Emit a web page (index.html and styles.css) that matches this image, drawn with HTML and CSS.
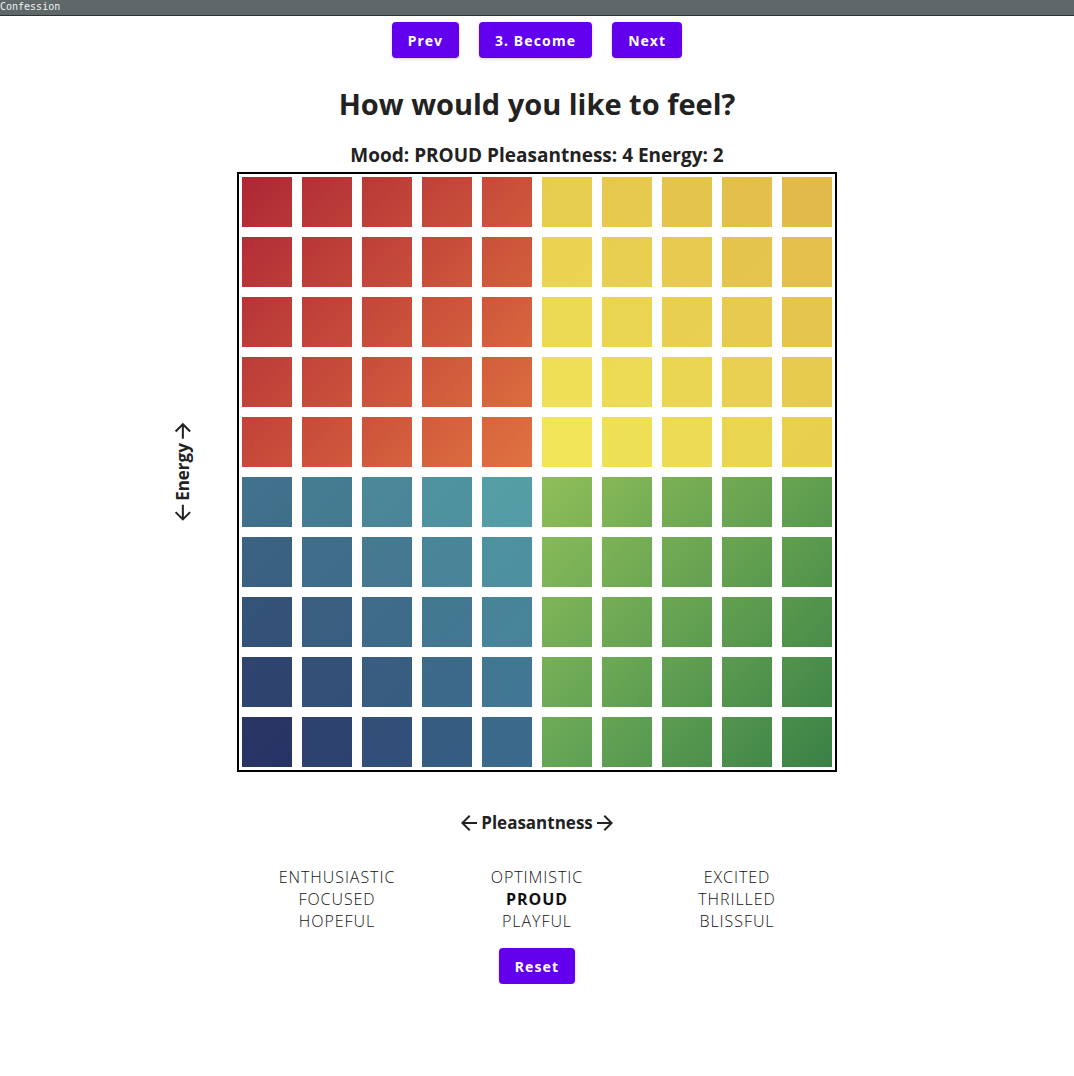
FILE: index.html
```html
<!DOCTYPE html>
<html>
<head>
<meta charset="utf-8">
<title>Confession</title>
<link rel="stylesheet" href="styles.css">
</head>
<body>
<div class="titlebar">Confession</div>
<nav class="nav">
  <button class="btn">Prev</button>
  <button class="btn">3. Become</button>
  <button class="btn">Next</button>
</nav>
<h1 class="title">How would you like to feel?</h1>
<h2 class="status">Mood: PROUD Pleasantness: 4 Energy: 2</h2>
<div class="stage">
  <div class="energy">
    <div class="axis axis-v">
      <svg class="arrow" viewBox="0 0 24 24"><path d="M20 11H7.83l5.59-5.59L12 4l-8 8 8 8 1.41-1.41L7.83 13H20v-2z"/></svg>
      <span>Energy</span>
      <svg class="arrow" viewBox="0 0 24 24"><path d="M4 11h12.17l-5.59-5.59L12 4l8 8-8 8-1.41-1.41L16.17 13H4v-2z"/></svg>
    </div>
  </div>
  <div class="board">
    <div class="quad q-red">
      <div></div><div></div><div></div><div></div><div></div>
      <div></div><div></div><div></div><div></div><div></div>
      <div></div><div></div><div></div><div></div><div></div>
      <div></div><div></div><div></div><div></div><div></div>
      <div></div><div></div><div></div><div></div><div></div>
    </div>
    <div class="quad q-yellow">
      <div></div><div></div><div></div><div></div><div></div>
      <div></div><div></div><div></div><div></div><div></div>
      <div></div><div></div><div></div><div></div><div></div>
      <div></div><div></div><div></div><div></div><div></div>
      <div></div><div></div><div></div><div></div><div></div>
    </div>
    <div class="quad q-blue">
      <div></div><div></div><div></div><div></div><div></div>
      <div></div><div></div><div></div><div></div><div></div>
      <div></div><div></div><div></div><div></div><div></div>
      <div></div><div></div><div></div><div></div><div></div>
      <div></div><div></div><div></div><div></div><div></div>
    </div>
    <div class="quad q-green">
      <div></div><div></div><div></div><div></div><div></div>
      <div></div><div></div><div></div><div></div><div></div>
      <div></div><div></div><div></div><div></div><div></div>
      <div></div><div></div><div></div><div></div><div></div>
      <div></div><div></div><div></div><div></div><div></div>
    </div>
  </div>
  <div></div>
</div>
<div class="axis axis-h">
  <svg class="arrow" viewBox="0 0 24 24"><path d="M20 11H7.83l5.59-5.59L12 4l-8 8 8 8 1.41-1.41L7.83 13H20v-2z"/></svg>
  <span>Pleasantness</span>
  <svg class="arrow" viewBox="0 0 24 24"><path d="M4 11h12.17l-5.59-5.59L12 4l8 8-8 8-1.41-1.41L16.17 13H4v-2z"/></svg>
</div>
<div class="words">
  <div class="col"><div>ENTHUSIASTIC</div><div>FOCUSED</div><div>HOPEFUL</div></div>
  <div class="col"><div>OPTIMISTIC</div><div class="sel">PROUD</div><div>PLAYFUL</div></div>
  <div class="col"><div>EXCITED</div><div>THRILLED</div><div>BLISSFUL</div></div>
</div>
<div class="reset-row"><button class="btn">Reset</button></div>
</body>
</html>
```
FILE: styles.css
```css
* { box-sizing: border-box; }
body {
  margin: 0;
  font-family: "Open Sans", "Noto Sans", sans-serif;
  color: #222;
  background: #fff;
}
.titlebar {
  height: 16px;
  background: #5f6769;
  border-bottom: 1px solid #2e3436;
  color: #f2f2f2;
  font-family: "DejaVu Sans Mono", monospace;
  font-size: 10px;
  line-height: 14px;
}
.nav {
  display: flex;
  justify-content: center;
  gap: 20px;
  margin-top: 6px;
}
.btn {
  height: 36px;
  padding: 0 16px;
  min-width: 64px;
  border: none;
  border-radius: 4px;
  background: #6200ee;
  color: #fff;
  font-family: "Noto Sans", sans-serif;
  font-weight: 700;
  font-size: 14px;
  letter-spacing: 1.1px;
  box-shadow: 0 1px 3px rgba(0,0,0,0.2);
}
.title {
  margin: 26px 0 0;
  text-align: center;
  font-size: 29px;
  line-height: 40px;
  font-weight: 700;
}
.status {
  margin: 19px 0 0;
  text-align: center;
  font-size: 19px;
  line-height: 24px;
  font-weight: 700;
}
.stage {
  margin-top: 5px;
  display: grid;
  grid-template-columns: 1fr auto 1fr;
  align-items: center;
}
.energy {
  justify-self: end;
  margin-right: 45px;
  width: 18px;
  display: flex;
  justify-content: center;
}
.axis {
  display: flex;
  align-items: center;
  font-weight: 700;
  font-size: 17px;
  line-height: 24px;
  white-space: nowrap;
}
.axis-v {
  transform: rotate(-90deg);
}
.axis-h {
  justify-content: center;
  margin-top: 39px;
}
.arrow {
  width: 24px;
  height: 24px;
  fill: #222;
  flex: none;
}
.board {
  border: 2px solid #000;
  padding: 3px;
  display: grid;
  grid-template-columns: auto auto;
  gap: 10px;
}
.quad {
  display: grid;
  grid-template-columns: repeat(5, 50px);
  grid-auto-rows: 50px;
  gap: 10px;
}
.quad > div {
  --c: 0;
  --r: 0;
  background: linear-gradient(135deg,
    color-mix(in srgb,
      color-mix(in srgb, var(--tl), var(--tr) calc(var(--c) * 20%)),
      color-mix(in srgb, var(--bl), var(--br) calc(var(--c) * 20%))
      calc(var(--r) * 20%)),
    color-mix(in srgb,
      color-mix(in srgb, var(--tl), var(--tr) calc((var(--c) + 1) * 20%)),
      color-mix(in srgb, var(--bl), var(--br) calc((var(--c) + 1) * 20%))
      calc((var(--r) + 1) * 20%)));
}
.quad > div:nth-child(5n+2) { --c: 1; }
.quad > div:nth-child(5n+3) { --c: 2; }
.quad > div:nth-child(5n+4) { --c: 3; }
.quad > div:nth-child(5n+5) { --c: 4; }
.quad > div:nth-child(n+6) { --r: 1; }
.quad > div:nth-child(n+11) { --r: 2; }
.quad > div:nth-child(n+16) { --r: 3; }
.quad > div:nth-child(n+21) { --r: 4; }
.q-red { --tl: #ad2736; --tr: #cb523a; --bl: #c6483a; --br: #e07340; }
.q-yellow { --tl: #e7cd4e; --tr: #e1b54a; --bl: #f3ec5b; --br: #e8d04f; }
.q-blue { --tl: #41728d; --tr: #5aa9ac; --bl: #23265b; --br: #3a6a8e; }
.q-green { --tl: #8fbe59; --tr: #5f9e4f; --bl: #67a757; --br: #3a8046; }
.words {
  display: flex;
  justify-content: center;
  margin-top: 31px;
}
.col {
  width: 200px;
  text-align: center;
  font-weight: 300;
  font-size: 16px;
  line-height: 22px;
  letter-spacing: 0.95px;
  color: #111;
}
.col .sel { font-weight: 700; }
.reset-row {
  display: flex;
  justify-content: center;
  margin-top: 16px;
}
```
